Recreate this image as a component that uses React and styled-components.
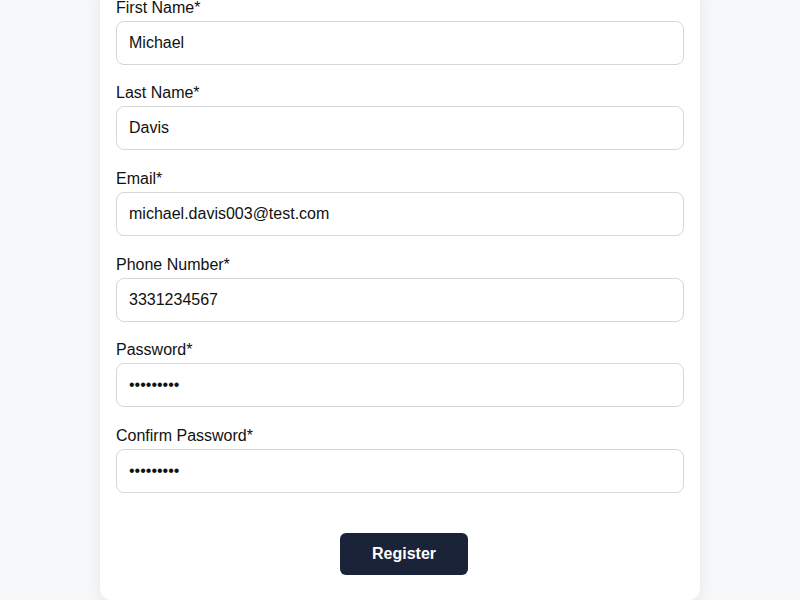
import React from "react";
import styled, { createGlobalStyle } from "styled-components";

const Global = createGlobalStyle`
  html, body { margin: 0; padding: 0; background: #f7f8fa; overflow: hidden; }
  body { font-family: "Liberation Sans", Arial, sans-serif; }
  * { box-sizing: border-box; }
`;

const Page = styled.div`
  height: 600px;
  display: flex;
  justify-content: center;
  align-items: flex-end;
  overflow: hidden;
`;

const Card = styled.form`
  width: 600px;
  background: #ffffff;
  border-radius: 12px;
  box-shadow: 0 4px 16px rgba(17, 24, 39, 0.08);
  padding: 16px 16px 25px;
  display: flex;
  flex-direction: column;
`;

const Field = styled.div`
  display: flex;
  flex-direction: column;
  margin-bottom: ${(p) => (p.$last ? "40px" : "18.7px")};
`;

const Label = styled.label`
  font-size: 16px;
  line-height: 19px;
  color: #111111;
  margin-bottom: 4px;
`;

const Input = styled.input`
  height: 44px;
  width: 100%;
  border: 1px solid #d4d6dc;
  border-radius: 8px;
  padding: 0 12px;
  font-family: "Liberation Sans", Arial, sans-serif;
  font-size: 16px;
  color: #111111;
  background: #ffffff;
  outline: none;
`;

const Actions = styled.div`
  display: flex;
  justify-content: center;
`;

const Button = styled.button`
  width: 128px;
  height: 42px;
  margin-left: 8px;
  border: none;
  border-radius: 6px;
  background: #1a2338;
  color: #ffffff;
  font-family: "Liberation Sans", Arial, sans-serif;
  font-weight: 700;
  font-size: 16px;
  cursor: pointer;
`;

const fields = [
  { label: "First Name*", value: "Michael", type: "text" },
  { label: "Last Name*", value: "Davis", type: "text" },
  { label: "Email*", value: "michael.davis003@test.com", type: "email" },
  { label: "Phone Number*", value: "3331234567", type: "tel" },
  { label: "Password*", value: "password1", type: "password" },
  { label: "Confirm Password*", value: "password1", type: "password" },
];

export default function App() {
  return (
    <>
      <Global />
      <Page>
        <Card onSubmit={(e) => e.preventDefault()}>
          {fields.map((f, i) => (
            <Field key={f.label} $last={i === fields.length - 1}>
              <Label>{f.label}</Label>
              <Input type={f.type} defaultValue={f.value} />
            </Field>
          ))}
          <Actions>
            <Button type="submit">Register</Button>
          </Actions>
        </Card>
      </Page>
    </>
  );
}
